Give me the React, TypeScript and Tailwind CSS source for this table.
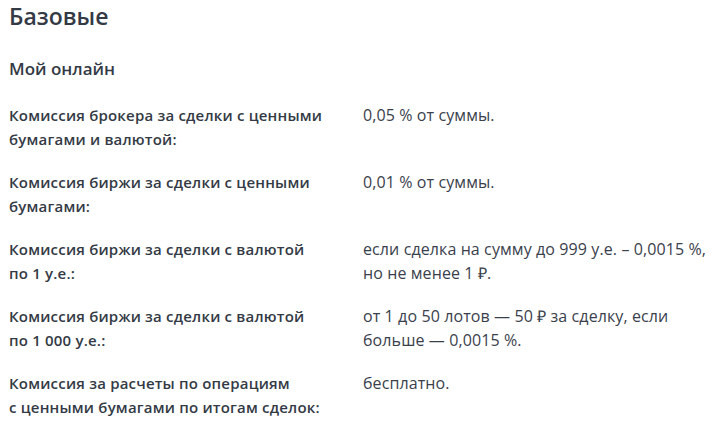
const rows: { label: string[]; value: string[] }[] = [
  {
    label: ["Комиссия брокера за сделки с ценными", "бумагами и валютой:"],
    value: ["0,05 % от суммы."],
  },
  {
    label: ["Комиссия биржи за сделки с ценными", "бумагами:"],
    value: ["0,01 % от суммы."],
  },
  {
    label: ["Комиссия биржи за сделки с валютой", "по 1 у.е.:"],
    value: ["если сделка на сумму до 999 у.е. – 0,0015 %,", "но не менее 1 ₽."],
  },
  {
    label: ["Комиссия биржи за сделки с валютой", "по 1 000 у.е.:"],
    value: ["от 1 до 50 лотов — 50 ₽ за сделку, если", "больше — 0,0015 %."],
  },
  {
    label: ["Комиссия за расчеты по операциям", "с ценными бумагами по итогам сделок:"],
    value: ["бесплатно."],
  },
];

export default function App() {
  return (
    <div className="w-[713px] h-[425px] overflow-hidden bg-white text-[#333a45] font-['Open_Sans',sans-serif] px-[9px]">
      <h1 className="text-[23px] leading-[32px] font-semibold">Базовые</h1>
      <h2 className="text-[17px] leading-[24px] font-semibold mt-[25px]">Мой онлайн</h2>

      {/* Tariff rows */}
      <div className="mt-[22px] flex flex-col gap-[19px] leading-[24px]">
        {rows.map((row, i) => (
          <div key={i} className="grid grid-cols-[354px_1fr]">
            <div className="font-semibold text-[15px] tracking-[0.2px] whitespace-nowrap">
              {row.label.map((l, j) => (
                <div key={j}>{l}</div>
              ))}
            </div>
            <div className="text-[16px] tracking-[0.1px] text-[#3a414c] whitespace-nowrap">
              {row.value.map((v, j) => (
                <div key={j}>{v}</div>
              ))}
            </div>
          </div>
        ))}
      </div>
    </div>
  );
}
